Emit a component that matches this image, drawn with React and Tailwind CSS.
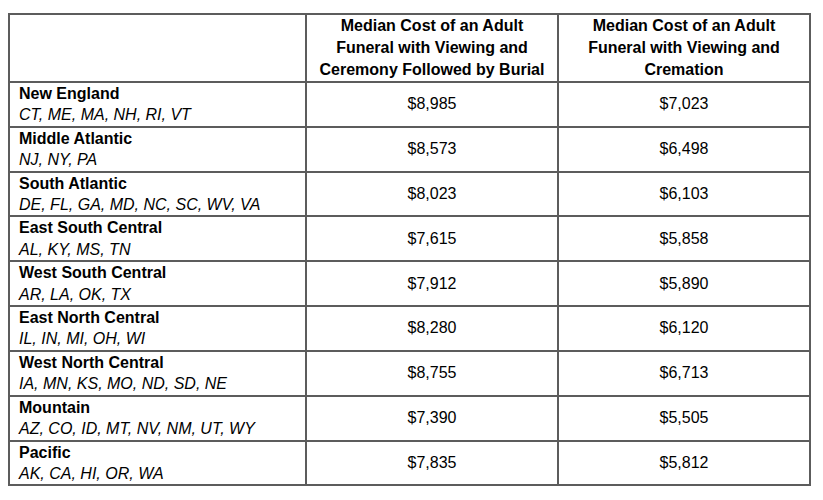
const rows = [
  { region: "New England", states: "CT, ME, MA, NH, RI, VT", burial: "$8,985", cremation: "$7,023" },
  { region: "Middle Atlantic", states: "NJ, NY, PA", burial: "$8,573", cremation: "$6,498" },
  { region: "South Atlantic", states: "DE, FL, GA, MD, NC, SC, WV, VA", burial: "$8,023", cremation: "$6,103" },
  { region: "East South Central", states: "AL, KY, MS, TN", burial: "$7,615", cremation: "$5,858" },
  { region: "West South Central", states: "AR, LA, OK, TX", burial: "$7,912", cremation: "$5,890" },
  { region: "East North Central", states: "IL, IN, MI, OH, WI", burial: "$8,280", cremation: "$6,120" },
  { region: "West North Central", states: "IA, MN, KS, MO, ND, SD, NE", burial: "$8,755", cremation: "$6,713" },
  { region: "Mountain", states: "AZ, CO, ID, MT, NV, NM, UT, WY", burial: "$7,390", cremation: "$5,505" },
  { region: "Pacific", states: "AK, CA, HI, OR, WA", burial: "$7,835", cremation: "$5,812" },
];

export default function App() {
  return (
    <div className="w-[823px] h-[500px] bg-white pl-[8px] pt-[13px] font-['Liberation_Sans',Arial,sans-serif] text-[16px] text-black">
      <table className="border-collapse table-fixed w-[801px]">
        <colgroup>
          <col className="w-[297px]" />
          <col className="w-[252px]" />
          <col className="w-[252px]" />
        </colgroup>
        <thead>
          <tr className="h-[66px]">
            <th className="border-2 border-[#5c5c5c] p-0"></th>
            <th className="border-2 border-[#5c5c5c] p-0 font-bold text-center leading-[22px]">
              Median Cost of an Adult<br />Funeral with Viewing and<br />Ceremony Followed by Burial
            </th>
            <th className="border-2 border-[#5c5c5c] p-0 font-bold text-center leading-[22px]">
              Median Cost of an Adult<br />Funeral with Viewing and<br />Cremation
            </th>
          </tr>
        </thead>
        <tbody>
          {rows.map((r) => (
            <tr key={r.region} className="h-[44.8px]">
              <td className="border-2 border-[#5c5c5c] py-0 pl-[9px] leading-[21.4px] align-middle">
                <div className="font-bold">{r.region}</div>
                <div className="italic">{r.states}</div>
              </td>
              <td className="border-2 border-[#5c5c5c] p-0 text-center">{r.burial}</td>
              <td className="border-2 border-[#5c5c5c] p-0 text-center">{r.cremation}</td>
            </tr>
          ))}
        </tbody>
      </table>
    </div>
  );
}
